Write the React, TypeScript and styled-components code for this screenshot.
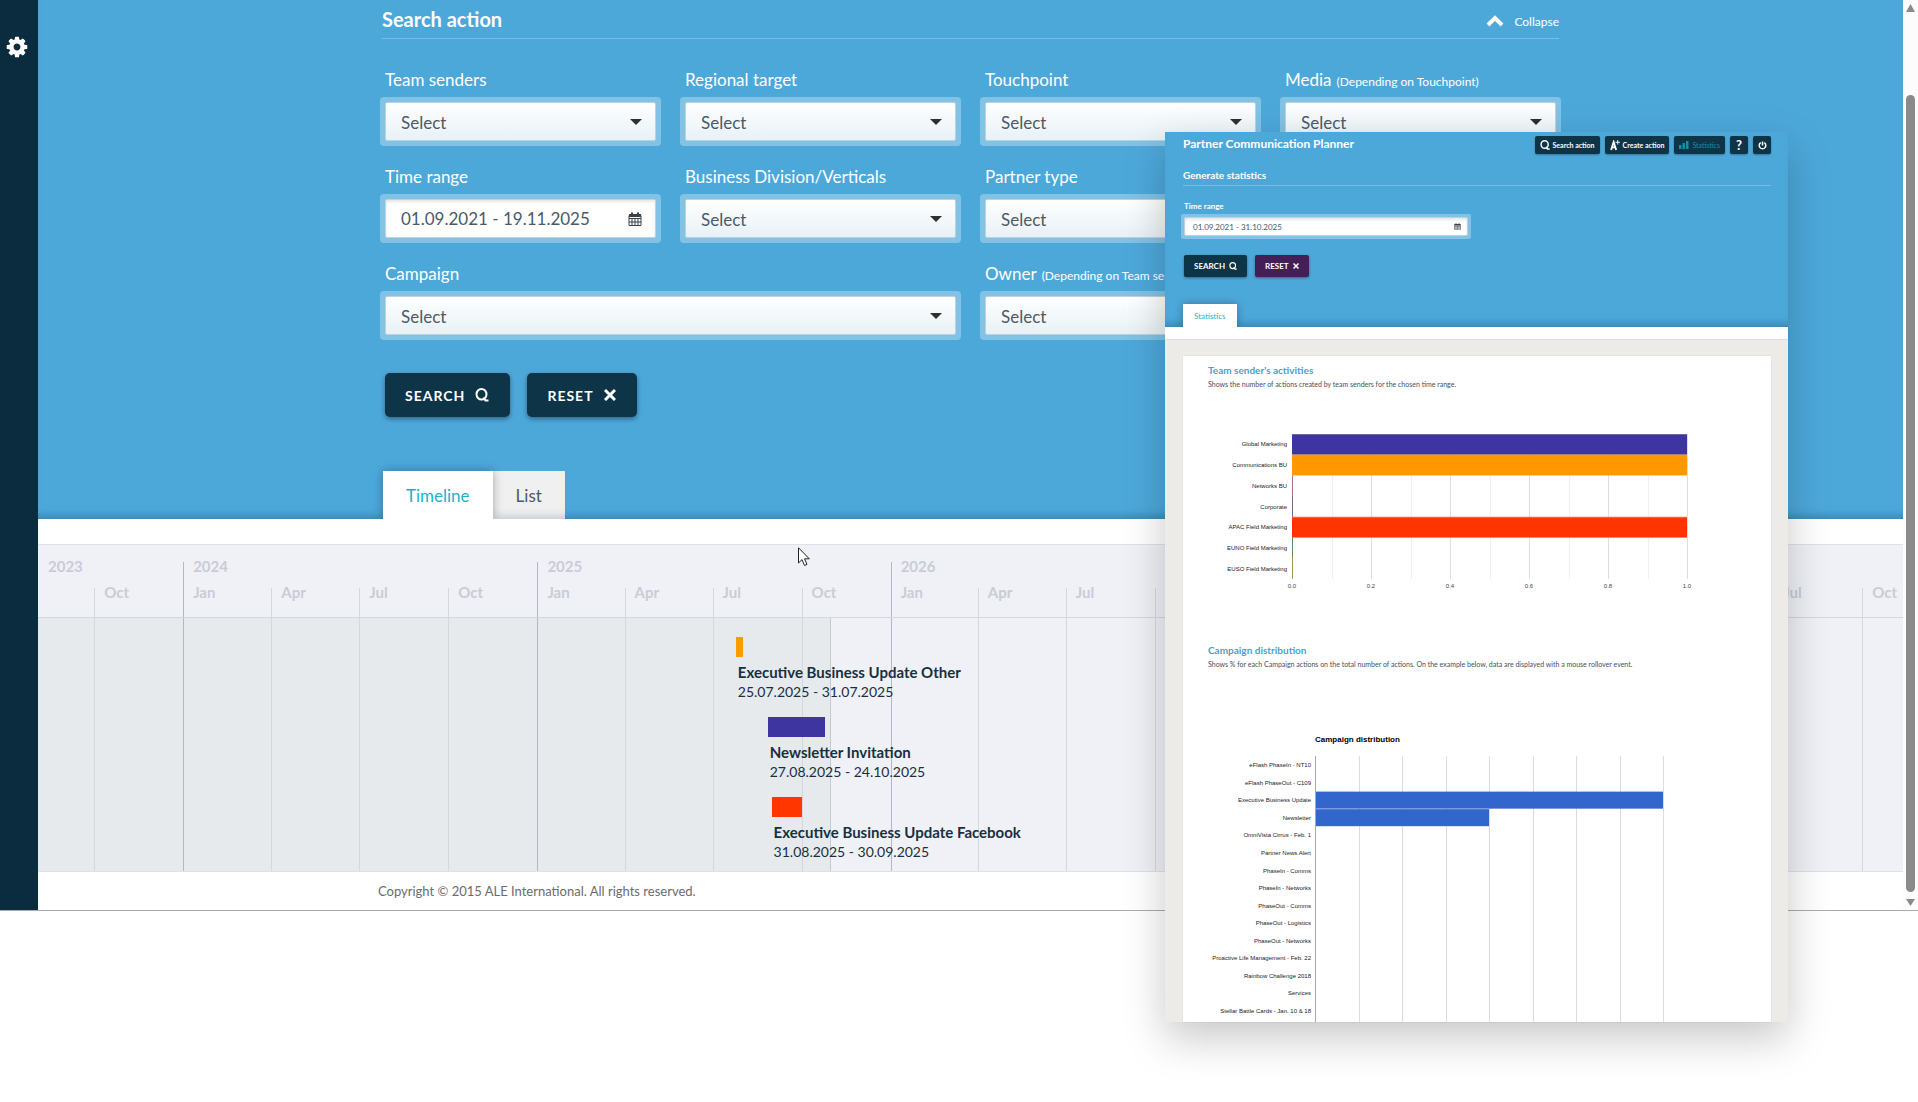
import React, { useId } from "react";
import styled, { createGlobalStyle, css } from "styled-components";

const c = {
  blue: "#4da8da",
  navy: "#0e3448",
  rail: "#0a2c3e",
  cyan: "#1fb1cb",
  text: "#4a5a68",
  line: "#d5d7df",
  yearLine: "#b3b6c4",
};

const Global = createGlobalStyle`
  *, *::before, *::after { box-sizing: border-box; }
  body { margin: 0; background: #fff; color: #17303e; font: 16px/20px Lato, "Noto Sans", sans-serif; }
  h1, h2, h3, p { margin: 0; }
  button, input, select { font-family: inherit; margin: 0; }
`;

/* ---------- timeline data ---------- */

const DAY = 86400000;
const ORIGIN = Date.UTC(2023, 7, 4);
const SPAN = 1927;
const day = (y: number, m: number, d: number) => (Date.UTC(y, m - 1, d) - ORIGIN) / DAY;
const pct = (days: number) => `${(days / SPAN) * 100}%`;
const MONTHS: Record<number, string> = { 1: "Jan", 4: "Apr", 7: "Jul", 10: "Oct" };

type Quarter = { year: number; month: number; start: number; label: string };
const quarters: Quarter[] = [{ year: 2023, month: 7, start: 0, label: "" }];
for (let y = 2023; y <= 2028; y++) {
  for (const m of [1, 4, 7, 10]) {
    const start = day(y, m, 1);
    if (start > 0 && start < SPAN) quarters.push({ year: y, month: m, start, label: MONTHS[m] });
  }
}
const columns = quarters
  .map((q, i) => `minmax(0, ${(quarters[i + 1]?.start ?? SPAN) - q.start}fr)`)
  .join(" ");
const years = [...new Set(quarters.map((q) => q.year))].map((year) => ({
  year,
  count: quarters.filter((q) => q.year === year).length,
}));

const actions = [
  { title: "Executive Business Update Other", dates: "25.07.2025 - 31.07.2025", from: day(2025, 7, 25), to: day(2025, 8, 1), color: "#ff9a00" },
  { title: "Newsletter Invitation", dates: "27.08.2025 - 24.10.2025", from: day(2025, 8, 27), to: day(2025, 10, 25), color: "#3e35a0" },
  { title: "Executive Business Update Facebook", dates: "31.08.2025 - 30.09.2025", from: day(2025, 8, 31), to: day(2025, 10, 1), color: "#ff3600" },
];

/* ---------- icons ---------- */

const Gear = () => (
  <svg width="24" height="24" viewBox="0 0 1792 1792" fill="#fff" aria-hidden="true">
    <path d="M1152 896q0-106-75-181t-181-75-181 75-75 181 75 181 181 75 181-75 75-181zm512-109v222q0 12-8 23t-20 13l-185 28q-19 54-39 91 35 50 107 138 10 12 10 25t-9 23q-27 37-99 108t-94 71q-12 0-26-9l-138-108q-44 23-91 38-16 136-29 186-7 28-36 28h-222q-14 0-24.500-8.500t-11.500-21.500l-28-184q-49-16-90-37l-141 107q-10 9-25 9-14 0-25-11-126-114-165-168-7-10-7-23 0-12 8-23 15-21 51-66.500t54-70.500q-27-50-41-99l-183-27q-13-2-21-12.500t-8-23.500v-222q0-12 8-23t19-13l186-28q14-46 39-92-40-57-107-138-10-12-10-24 0-10 9-23 26-36 98.500-107.500t94.500-71.500q13 0 26 10l138 107q44-23 91-38 16-136 29-186 7-28 36-28h222q14 0 24.500 8.500t11.500 21.500l28 184q49 16 90 37l142-107q9-9 24-9 13 0 25 10 129 119 165 170 7 8 7 22 0 12-8 23-15 21-51 66.500t-54 70.500q26 50 41 98l183 28q13 2 21 12.500t8 23.500z" />
  </svg>
);

const Magnifier = ({ size }: { size: number }) => (
  <svg width={size} height={size} viewBox="0 0 14 14" fill="none" stroke="currentColor" aria-hidden="true">
    <ellipse cx="6.500" cy="6.300" rx="5" ry="5.300" strokeWidth="2" />
    <path d="M8.500 9.500 L10.500 12.500 H13.500" strokeWidth="2" />
  </svg>
);

const Cross = ({ size }: { size: number }) => (
  <svg width={size} height={size} viewBox="0 0 12 12" stroke="currentColor" strokeWidth="3" aria-hidden="true">
    <path d="M1 1 L11 11 M11 1 L1 11" />
  </svg>
);

const ChevronUp = () => (
  <svg width="18" height="12" viewBox="0 0 18 12" fill="none" stroke="#fff" strokeWidth="4" aria-hidden="true">
    <path d="M2 10 L9 3 L16 10" />
  </svg>
);

const Calendar = ({ size }: { size: number }) => (
  <svg width={size} height={size} viewBox="0 0 14 14" fill="none" stroke="#3c4348" aria-hidden="true">
    <path d="M1 3.500 H13 V13.500 H1 Z M1 6.500 H13 M1 10 H13 M4 6 V13 M7 6 V13 M10 6 V13" />
    <path d="M1 3.500 H13" strokeWidth="3" />
    <path d="M4 0.500 V4 M10 0.500 V4" strokeWidth="2" />
  </svg>
);

const CreateIcon = () => (
  <svg width="10" height="11" viewBox="0 0 11 12" fill="none" stroke="#fff" aria-hidden="true">
    <path d="M1.200 11 L4 2 L6.800 11 M2 8 H6" strokeWidth="2" />
    <path d="M6 2.500 H11 M8.500 0 V5" strokeWidth="1" />
  </svg>
);

const BarsIcon = () => (
  <svg width="10" height="8" viewBox="0 0 10 8" fill="currentColor" aria-hidden="true">
    <path d="M0 4 H2.500 V8 H0 Z M3.500 2 H6 V8 H3.500 Z M7 0 H9.500 V8 H7 Z" />
  </svg>
);

const PowerIcon = () => (
  <svg width="9" height="9" viewBox="0 0 9 9" fill="none" stroke="#fff" strokeWidth="1.500" aria-hidden="true">
    <path d="M2.700 1.700 A3.300 3.300 0 1 0 6.300 1.700 M4.500 0.500 V4.500" />
  </svg>
);

const Pointer = styled.svg`
  position: absolute;
  left: 798px;
  top: 547px;
`;

/* ---------- frame ---------- */

const Page = styled.div`
  position: relative;
  min-height: 100vh;
`;
const Shell = styled.div`
  display: flex;
  border-bottom: 1px solid #a9abad;
`;
const Rail = styled.aside`
  flex: none;
  width: 38px;
  background: ${c.rail};
`;
const RailButton = styled.button`
  display: block;
  padding: 35px 0 0 5px;
  border: 0;
  background: none;
  line-height: 0;
`;
const Main = styled.main`
  flex: 1;
  min-width: 0;
  display: flex;
  flex-direction: column;
`;
const Container = styled.div`
  width: 1177px;
  max-width: 100%;
  margin: 0 auto;
`;
const ScrollTrack = styled.div`
  flex: none;
  width: 15px;
  padding: 4px 3px;
  display: flex;
  flex-direction: column;
  justify-content: space-between;
  background: #fcfcfc;
  svg { display: block; }
`;
const ScrollThumb = styled.div`
  flex: 1;
  margin: 83px 0 7px;
  border-radius: 5px;
  background: #8a8a8a;
`;

/* ---------- search panel ---------- */

const Panel = styled.section`
  background: ${c.blue};
  color: #fff;
  overflow: hidden;
  box-shadow: inset 0 -9px 9px -6px rgba(20, 60, 90, 0.35);
`;
const PanelHead = styled.header`
  display: flex;
  justify-content: space-between;
  align-items: center;
  height: 39px;
  border-bottom: 1px solid #79bde3;
`;
const PanelTitle = styled.h1`
  font-size: 20px;
  line-height: 24px;
  font-weight: 700;
`;
const Collapse = styled.button`
  display: flex;
  align-items: center;
  gap: 10px;
  padding: 4px 0 0;
  border: 0;
  background: none;
  color: #fff;
  font-size: 12px;
`;
const FieldGrid = styled.div`
  display: grid;
  grid-template-columns: repeat(4, minmax(0, 1fr));
  gap: 19px;
  margin: 29px -2px 0;
`;
const Field = styled.div<{ $span?: number }>`
  grid-column: span ${(p) => p.$span ?? 1};
`;
const FieldLabel = styled.label<{ $small?: boolean }>`
  display: block;
  padding: 0 5px;
  font-size: 17px;
  line-height: 24px;
  margin-bottom: 5px;
  white-space: nowrap;
  small { font-size: 12px; line-height: 12px; margin-left: 5px; }
  ${(p) => p.$small && css`
    padding: 0 3px;
    font-size: 8px;
    line-height: 12px;
    margin-bottom: 2px;
    font-weight: 700;
  `}
`;
const FieldBox = styled.div<{ $small?: boolean }>`
  display: grid;
  align-items: center;
  padding: ${(p) => (p.$small ? "3px" : "5px")};
  border-radius: ${(p) => (p.$small ? "2px" : "4px")};
  background: rgba(255, 255, 255, 0.3);
  > * { grid-area: 1 / 1; }
  > svg {
    justify-self: end;
    margin-right: ${(p) => (p.$small ? "7px" : "14px")};
    pointer-events: none;
  }
`;
const control = css`
  width: 100%;
  height: 39px;
  border: 1px solid #bcd3df;
  border-radius: 2px;
  padding: 2px 14px 0 15px;
  color: ${c.text};
  font-size: 17px;
  line-height: 22px;
`;
const Select = styled.select`
  ${control}
  appearance: none;
  background: linear-gradient(#fff, #e8f1f6);
`;
const DateInput = styled.input<{ $small?: boolean }>`
  ${control}
  padding-top: 0;
  background: #fff;
  box-shadow: inset 0 2px 3px rgba(0, 0, 0, 0.1);
  ${(p) => p.$small && css`
    height: 19px;
    padding: 0 8px;
    font-size: 8px;
    line-height: 12px;
  `}
`;
const Actions = styled.div<{ $small?: boolean }>`
  display: flex;
  gap: ${(p) => (p.$small ? "8px" : "17px")};
  margin: ${(p) => (p.$small ? "16px 1px 27px" : "33px 3px 54px")};
`;
const ActionButton = styled.button<{ $small?: boolean; $tone?: string }>`
  display: flex;
  align-items: center;
  gap: 10px;
  height: 44px;
  padding: 0 21px 0 20px;
  border: 0;
  border-radius: 5px;
  background: ${(p) => p.$tone ?? c.navy};
  color: #fff;
  font-size: 14px;
  font-weight: 700;
  letter-spacing: 1px;
  box-shadow: 0 2px 5px rgba(0, 0, 0, 0.4);
  ${(p) => p.$small && css`
    gap: 4px;
    height: 22px;
    padding: 0 10px;
    border-radius: 2px;
    font-size: 8px;
    letter-spacing: 0;
    box-shadow: 0 1px 3px rgba(0, 0, 0, 0.4);
  `}
`;
const Tabs = styled.div<{ $small?: boolean }>`
  display: flex;
  padding-left: ${(p) => (p.$small ? "0" : "1px")};
`;
const Tab = styled.button<{ $active?: boolean; $small?: boolean }>`
  height: 48px;
  padding: 0 23px;
  border: 0;
  background: #f0f0f0;
  color: ${c.text};
  font-size: 17px;
  box-shadow: inset 0 -9px 9px -6px rgba(20, 60, 90, 0.2);
  ${(p) => p.$active && css`
    position: relative;
    background: #fff;
    color: ${c.cyan};
    box-shadow: 0 0 10px rgba(0, 0, 0, 0.3);
  `}
  ${(p) => p.$small && css`
    height: 23px;
    padding: 0 11px;
    font-size: 8px;
  `}
`;
const Strip = styled.div<{ $small?: boolean }>`
  height: ${(p) => (p.$small ? "13px" : "25px")};
  background: #fff;
  border-bottom: ${(p) => (p.$small ? "1px solid #dfdfdc" : "0")};
`;

/* ---------- timeline ---------- */

const Timeline = styled.section`
  background: #f0f1f6;
  border-top: 1px solid #dfe2e4;
  border-bottom: 1px solid #dfe2e4;
`;
const TimelineHead = styled.div`
  padding-top: 17px;
  border-bottom: 1px solid ${c.line};
  color: #c9ccd7;
  font-size: 15px;
  font-weight: 700;
`;
const QuarterRow = styled.div`
  display: grid;
  grid-template-columns: ${columns};
`;
const YearCell = styled.div<{ $count: number; $first: boolean }>`
  grid-column: span ${(p) => p.$count};
  height: 26px;
  padding-left: ${(p) => (p.$first ? "10px" : "9px")};
  line-height: 8px;
  border-left: ${(p) => (p.$first ? "0" : `1px solid ${c.yearLine}`)};
`;
const QuarterCell = styled.div<{ $first: boolean; $year: boolean }>`
  height: 29px;
  padding-left: 9px;
  line-height: 8px;
  border-left: ${(p) => (p.$first ? "0" : `1px solid ${p.$year ? c.yearLine : c.line}`)};
`;
const TimelineBody = styled.div`
  display: grid;
  > * { grid-area: 1 / 1; }
`;
const Past = styled.div`
  background: #e6eaec;
  border-right: 1px solid #c5c9d0;
`;
const GridLines = styled(QuarterRow)`
  ${QuarterCell} { height: auto; }
`;
const ActionList = styled.ul`
  display: flex;
  flex-direction: column;
  gap: 15px;
  margin: 0;
  padding: 19px 0 9px;
  list-style: none;
`;
const ActionBar = styled.div`
  height: 20px;
  margin-bottom: 5px;
`;
const ActionTitle = styled.h3`
  padding-left: 2px;
  font-size: 15px;
  line-height: 20px;
  font-weight: 700;
  white-space: nowrap;
`;
const ActionDates = styled.p`
  padding-left: 2px;
  font-size: 14px;
  line-height: 20px;
`;
const Footer = styled.footer`
  padding: 9px 0;
  background: #fff;
  color: #6c6c6c;
  font-size: 13px;
`;
const FooterText = styled.p`
  margin-left: -4px;
`;

/* ---------- statistics window ---------- */

const Window = styled.section`
  position: absolute;
  top: 132px;
  right: 130px;
  width: 623px;
  height: 890px;
  display: flex;
  flex-direction: column;
  background: #ecebe7;
  box-shadow: 0 16px 40px rgba(0, 0, 0, 0.22);
`;
const WindowTop = styled(Panel)`
  flex: none;
  padding: 4px 17px 0 18px;
`;
const WindowBar = styled.div`
  display: flex;
  justify-content: space-between;
  height: 18px;
`;
const WindowTitle = styled.h2`
  font-size: 12px;
  line-height: 16px;
  font-weight: 700;
`;
const Nav = styled.nav`
  display: flex;
  gap: 5px;
`;
const NavButton = styled.button<{ $active?: boolean; $icon?: boolean }>`
  display: flex;
  align-items: center;
  justify-content: center;
  gap: 3px;
  min-width: 18px;
  padding: 0 ${(p) => (p.$icon ? "0" : "5px")};
  border: 0;
  border-radius: 2px;
  background: ${c.navy};
  color: ${(p) => (p.$active ? "#128fae" : "#fff")};
  font-size: ${(p) => (p.$icon ? "13px" : "7px")};
  font-weight: ${(p) => (p.$active ? 400 : 700)};
  line-height: 12px;
  box-shadow: 0 1px 2px rgba(0, 0, 0, 0.3);
`;
const WindowHeading = styled.h3`
  padding: 15px 0 4px;
  border-bottom: 1px solid #79bde3;
  font-size: 10px;
  line-height: 12px;
`;
const WindowFields = styled.div`
  display: grid;
  grid-template-columns: repeat(2, minmax(0, 1fr));
  gap: 12px;
  margin: 14px -2px 0;
`;
const WindowBody = styled.div`
  flex: 1;
  min-height: 0;
  display: flex;
  padding: 16px 17px 0 18px;
`;
const Card = styled.div`
  flex: 1;
  min-width: 0;
  padding: 8px 25px 0;
  background: #fff;
  box-shadow: 0 0 1px rgba(0, 0, 0, 0.2);
  overflow: hidden;
`;
const CardTitle = styled.h3`
  color: #4c9fcb;
  font-size: 10px;
  line-height: 12px;
  font-weight: 700;
`;
const CardText = styled.p`
  margin-top: 3px;
  color: #3f5160;
  font-size: 7px;
  line-height: 10px;
  white-space: nowrap;
`;
const Chart = styled.svg<{ $top: number; $bottom?: number }>`
  display: block;
  width: 100%;
  margin: ${(p) => p.$top}px 0 ${(p) => p.$bottom ?? 0}px;
  font-family: "Liberation Sans", Arial, sans-serif;
  font-size: 6px;
  fill: #222;
`;

const teams = [
  { name: "Global Marketing", value: 1, color: "#3e35a0", axis: "#8a86c4" },
  { name: "Communications BU", value: 1, color: "#ff9800", axis: "#d9a04a" },
  { name: "Networks BU", value: 0, color: "", axis: "#a5788c" },
  { name: "Corporate", value: 0, color: "", axis: "#7d6b8d" },
  { name: "APAC Field Marketing", value: 1, color: "#ff3400", axis: "#ff8a6a" },
  { name: "EUNO Field Marketing", value: 0, color: "", axis: "#5f8a5c" },
  { name: "EUSO Field Marketing", value: 0, color: "", axis: "#a89553" },
];

const campaigns = [
  "eFlash PhaseIn - NT10", "eFlash PhaseOut - C109", "Executive Business Update", "Newsletter",
  "OmniVista Cirrus - Feb. 1", "Partner News Alert", "PhaseIn - Comms", "PhaseIn - Networks",
  "PhaseOut - Comms", "PhaseOut - Logistics", "PhaseOut - Networks", "Proactive Life Management - Feb. 22",
  "Rainbow Challenge 2018", "Services", "Stellar Battle Cards - Jan. 10 & 18",
];

function TeamChart() {
  const x0 = 84;
  const width = 395;
  const row = 145 / 7;
  return (
    <Chart $top={45} $bottom={50} height="160" role="img" aria-label="Team sender's activities">
      {Array.from({ length: 11 }, (_, i) => (
        <rect key={i} x={Math.round(x0 + (width / 10) * i)} y="0" width="1" height="145" fill={i % 2 ? "#f0f0f0" : "#dedede"} />
      ))}
      {teams.map((t, i) => (
        <g key={t.name}>
          <text x="79" y={row * (i + 0.5) + 2} textAnchor="end">{t.name}</text>
          <rect x={x0} y={row * i} width={t.value ? width : 1} height={row} fill={t.value ? t.color : t.axis} />
          {t.value > 0 && <rect x={x0} y={row * i} width={width} height="1" fill={t.axis} opacity="0.6" />}
        </g>
      ))}
      {[0, 0.2, 0.4, 0.6, 0.8, 1].map((v) => (
        <text key={v} x={x0 + v * width} y="154" textAnchor="middle" fill="#444">{v.toFixed(1)}</text>
      ))}
    </Chart>
  );
}

function CampaignChart() {
  const x0 = 107;
  const step = 348 / 8;
  const row = 17.55;
  const values: Record<string, number> = { "Executive Business Update": 8, Newsletter: 4 };
  return (
    <Chart $top={61} height="293" role="img" aria-label="Campaign distribution">
      <text x={x0} y="12" fontSize="8" fontWeight="700" fill="#000">Campaign distribution</text>
      {Array.from({ length: 9 }, (_, i) => (
        <rect key={i} x={Math.round(x0 + step * i)} y="26" width="1" height="267" fill={i ? "#dcdcdc" : "#a8a8a8"} />
      ))}
      {campaigns.map((name, i) => (
        <g key={name}>
          {values[name] && (
            <rect x={x0 + 1} y={26.5 + row * i} width={step * values[name] - 1} height={row - 0.5} fill="#3366cc" />
          )}
          <text x="103" y={26 + row * (i + 0.5) + 2.5} textAnchor="end">{name}</text>
        </g>
      ))}
    </Chart>
  );
}

/* ---------- fields ---------- */

function SelectField({ label, hint, span }: { label: string; hint?: string; span?: number }) {
  const id = useId();
  return (
    <Field $span={span}>
      <FieldLabel htmlFor={id}>{label}{hint && <small>{hint}</small>}</FieldLabel>
      <FieldBox>
        <Select id={id} defaultValue=""><option value="">Select</option></Select>
        <svg width="12" height="6" viewBox="0 0 12 6" fill="#2b3034" aria-hidden="true"><path d="M0 0 H12 L6 6 Z" /></svg>
      </FieldBox>
    </Field>
  );
}

function DateField({ value, small }: { value: string; small?: boolean }) {
  const id = useId();
  return (
    <Field>
      <FieldLabel htmlFor={id} $small={small}>Time range</FieldLabel>
      <FieldBox $small={small}>
        <DateInput id={id} type="text" defaultValue={value} $small={small} />
        <Calendar size={small ? 7 : 14} />
      </FieldBox>
    </Field>
  );
}

function FormActions({ small }: { small?: boolean }) {
  return (
    <Actions $small={small}>
      <ActionButton type="button" $small={small}>SEARCH <Magnifier size={small ? 8 : 14} /></ActionButton>
      <ActionButton type="button" $small={small} $tone={small ? "#441e57" : undefined}>RESET <Cross size={small ? 6 : 12} /></ActionButton>
    </Actions>
  );
}

function StatisticsWindow() {
  return (
    <Window>
      <WindowTop>
        <WindowBar>
          <WindowTitle>Partner Communication Planner</WindowTitle>
          <Nav>
            <NavButton type="button"><Magnifier size={10} />Search action</NavButton>
            <NavButton type="button"><CreateIcon />Create action</NavButton>
            <NavButton type="button" $active><BarsIcon />Statistics</NavButton>
            <NavButton type="button" $icon>?</NavButton>
            <NavButton type="button" $icon aria-label="Log out"><PowerIcon /></NavButton>
          </Nav>
        </WindowBar>
        <WindowHeading>Generate statistics</WindowHeading>
        <WindowFields><DateField small value="01.09.2021 - 31.10.2025" /></WindowFields>
        <FormActions small />
        <Tabs $small><Tab type="button" $active $small>Statistics</Tab></Tabs>
      </WindowTop>
      <Strip $small />
      <WindowBody>
        <Card>
          <CardTitle>Team sender's activities</CardTitle>
          <CardText>Shows the number of actions created by team senders for the chosen time range.</CardText>
          <TeamChart />
          <CardTitle>Campaign distribution</CardTitle>
          <CardText>Shows % for each Campaign actions on the total number of actions. On the example below, data are displayed with a mouse rollover event.</CardText>
          <CampaignChart />
        </Card>
      </WindowBody>
    </Window>
  );
}

export default function App() {
  return (
    <Page>
      <Global />
      <Shell>
        <Rail><RailButton type="button" aria-label="Settings"><Gear /></RailButton></Rail>
        <Main>
          <Panel>
            <Container>
              <PanelHead>
                <PanelTitle>Search action</PanelTitle>
                <Collapse type="button"><ChevronUp />Collapse</Collapse>
              </PanelHead>
              <FieldGrid>
                <SelectField label="Team senders" />
                <SelectField label="Regional target" />
                <SelectField label="Touchpoint" />
                <SelectField label="Media" hint="(Depending on Touchpoint)" />
                <DateField value="01.09.2021 - 19.11.2025" />
                <SelectField label="Business Division/Verticals" />
                <SelectField label="Partner type" span={2} />
                <SelectField label="Campaign" span={2} />
                <SelectField label="Owner" hint="(Depending on Team senders)" span={2} />
              </FieldGrid>
              <FormActions />
              <Tabs>
                <Tab type="button" $active>Timeline</Tab>
                <Tab type="button">List</Tab>
              </Tabs>
            </Container>
          </Panel>
          <Strip />
          <Timeline>
            <TimelineHead>
              <QuarterRow>
                {years.map((y, i) => <YearCell key={y.year} $count={y.count} $first={i === 0}>{y.year}</YearCell>)}
              </QuarterRow>
              <QuarterRow>
                {quarters.map((q, i) => <QuarterCell key={q.start} $first={i === 0} $year={q.month === 1}>{q.label}</QuarterCell>)}
              </QuarterRow>
            </TimelineHead>
            <TimelineBody>
              <Past style={{ width: pct(day(2025, 10, 31)) }} />
              <GridLines>
                {quarters.map((q, i) => <QuarterCell key={q.start} $first={i === 0} $year={q.month === 1} />)}
              </GridLines>
              <ActionList>
                {actions.map((a) => (
                  <li key={a.title} style={{ marginLeft: pct(a.from) }}>
                    <ActionBar style={{ width: `${((a.to - a.from) / (SPAN - a.from)) * 100}%`, background: a.color }} />
                    <ActionTitle>{a.title}</ActionTitle>
                    <ActionDates>{a.dates}</ActionDates>
                  </li>
                ))}
              </ActionList>
            </TimelineBody>
          </Timeline>
          <Footer><Container><FooterText>Copyright © 2015 ALE International. All rights reserved.</FooterText></Container></Footer>
        </Main>
        <ScrollTrack aria-hidden="true">
          <svg width="9" height="8" viewBox="0 0 9 8" fill="#8a8a8a"><path d="M4.500 0 L9 8 H0 Z" /></svg>
          <ScrollThumb />
          <svg width="9" height="7" viewBox="0 0 9 7" fill="#8a8a8a"><path d="M0 0 H9 L4.500 7 Z" /></svg>
        </ScrollTrack>
      </Shell>
      <StatisticsWindow />
      <Pointer width="12" height="20" viewBox="0 0 12 20" fill="#fff" stroke="#222" aria-hidden="true">
        <path d="M0.500 0.800 V16 L4 12.600 L6.500 18.500 L9 17.400 L6.500 11.800 H11.300 Z" />
      </Pointer>
    </Page>
  );
}
